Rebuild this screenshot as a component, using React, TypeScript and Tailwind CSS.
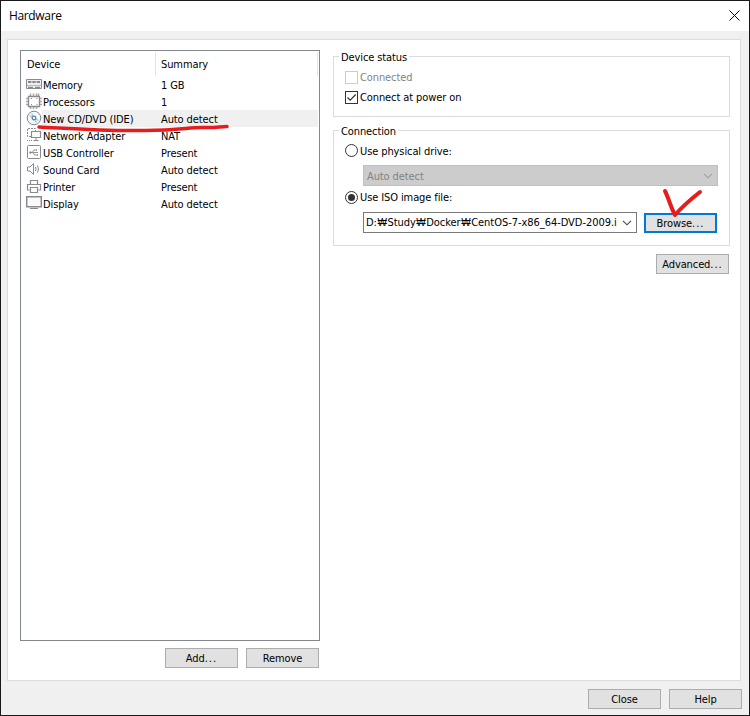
import type { ReactNode } from "react";

const devices = [
  { name: "Memory", summary: "1 GB", icon: "memory" },
  { name: "Processors", summary: "1", icon: "cpu" },
  { name: "New CD/DVD (IDE)", summary: "Auto detect", icon: "disc" },
  { name: "Network Adapter", summary: "NAT", icon: "network" },
  { name: "USB Controller", summary: "Present", icon: "usb" },
  { name: "Sound Card", summary: "Auto detect", icon: "sound" },
  { name: "Printer", summary: "Present", icon: "printer" },
  { name: "Display", summary: "Auto detect", icon: "display" },
];

function DeviceIcon({ type }: { type: string }) {
  return (
    <svg width="17" height="17" viewBox="0 0 17 17" fill="none" stroke="#8a8a8a" className="block shrink-0">
      {type === "memory" && (
        <>
          <path d="M.5 3.5h15v9H.5z" fill="#eee" />
          <path d="M2 6h12" strokeWidth="2" strokeDasharray="3.4 .9" />
          <path d="M1 9.5h14" stroke="#bbb" />
          <path d="M2 11.5h5M9 11.5h5" strokeWidth="1.6" />
        </>
      )}
      {type === "cpu" && (
        <>
          <path d="M4.5 .5v3M7.5 .5v3M10.5 .5v3M12.5 .5v3M4.5 13v3M7.5 13v3M10.5 13v3M0 5.5h3M0 8.5h3M0 11.5h3M13 5.5h3M13 8.5h3M13 11.5h3" strokeWidth="1.5" stroke="#aaa" />
          <path d="M2.5 3.5h11v10h-11z" fill="#fff" strokeWidth="1.3" />
          <path d="M5 5.5h1M10.500 5.5h1M5 11.5h1M10.5 11.5h1" />
        </>
      )}
      {type === "disc" && (
        <>
          <circle cx="8" cy="8" r="6.8" stroke="#7d858b" fill="#f5f9fb" />
          <path d="M3.5 5.5L6 7M5.5 3.5L7 6M9 10l1.5 2.5M10 9l2.5 1.5" stroke="#a5c3d3" strokeWidth="1.3" />
          <circle cx="8" cy="8" r="1.8" stroke="#5289a6" fill="#fff" strokeWidth="1.3" />
        </>
      )}
      {type === "network" && (
        <>
          <path d="M5 9.5H1.5v-8h8V4" strokeDasharray="2 1" />
          <path d="M5.5 4.5h9v6h-9z" fill="#fff" strokeWidth="1.2" />
          <path d="M10 11v2.5M7.5 13.5h5" />
          <path d="M1 13.5h6" strokeDasharray="1 1" />
        </>
      )}
      {type === "usb" && (
        <>
          <rect x="1.5" y="1.5" width="13" height="13" rx="1" />
          <path d="M4 8.5h8M6 8.5l2-2.5h2M7 8.5l1.5 2.5H11" strokeWidth=".9" />
          <circle cx="4.5" cy="8.5" r=".8" fill="#858585" />
          <path d="M10 6h1M11 11h1" strokeWidth="1.6" />
        </>
      )}
      {type === "sound" && (
        <>
          <path d="M1.5 6H4l3.5-3.5v11L4 10H1.500z" />
          <path d="M9.5 6q1 2 0 4M11.5 4.5q2 3.500 0 7" />
        </>
      )}
      {type === "printer" && (
        <>
          <path d="M4.5 6V2.5h7V6M3.5 12h-2V6.5h13V12h-2" strokeWidth="1.2" />
          <path d="M4.5 9.5h7v5h-7z" strokeWidth="1.2" />
        </>
      )}
      {type === "display" && (
        <>
          <path d="M.7 1.7h14.600v10H.7z" strokeWidth="1.5" fill="#fafafa" />
          <path d="M4 13.5h8" />
        </>
      )}
    </svg>
  );
}

function Button({ children, primary = false, dots = false, className = "" }: { children: ReactNode; primary?: boolean; dots?: boolean; className?: string }) {
  return (
    <button
      className={`flex h-5 w-[73px] items-center justify-center bg-[#e1e1e1] ${
        primary ? "border-2 border-[#0078d7]" : "border border-[#adadad]"
      } ${className}`}
    >
      {children}
      {dots && <span className="tracking-[1px]">...</span>}
    </button>
  );
}

function Chevron({ color }: { color: string }) {
  return (
    <svg width="10" height="6" viewBox="0 0 10 6" fill="none" stroke={color} className="shrink-0">
      <path d="M1 .8l4 4 4-4" strokeWidth="1.1" />
    </svg>
  );
}

function Radio({ checked = false }: { checked?: boolean }) {
  return (
    <span className="flex size-[13px] shrink-0 items-center justify-center rounded-full border border-[#333] bg-white">
      {checked && <span className="size-[7px] rounded-full bg-[#333]" />}
    </span>
  );
}

function Won() {
  return <span className="inline-block w-[10.5px] text-center font-['Liberation_Sans',sans-serif] text-[10px] tracking-normal">₩</span>;
}

export default function App() {
  return (
    <div className="relative flex h-[716px] w-[750px] flex-col border border-[#18171c] bg-[#f0f0f0] font-['DejaVu_Sans_Condensed','DejaVu_Sans',sans-serif] text-[11px] leading-[17px] tracking-[-0.1px] text-black [font-stretch:condensed]">
      <header className="flex h-[30px] shrink-0 items-center justify-between bg-white pr-[9px] pl-2">
        <h1 className="-mt-[2px] font-['Open_Sans',sans-serif] text-[12px] tracking-[-0.35px] [font-stretch:normal]">Hardware</h1>
        <svg width="11" height="11" viewBox="0 0 11 11" stroke="#000" fill="none" className="-mt-[2px]">
          <path d="M.5.5l10 10M10.5.5l-10 10" />
        </svg>
      </header>

      <main className="mx-[6px] mt-2 flex h-[642px] w-[734px] shrink-0 border border-[#dcdcdc] bg-white pt-[10px] pl-3">
        <section className="w-[300px] shrink-0">
          <div className="h-[591px] border border-[#828790] px-[1px] pt-[1px]">
            <div className="flex h-6 items-center">
              <div className="flex h-full w-[134px] items-center border-r border-[#e5e5e5] pl-[5px]">Device</div>
              <div className="flex h-full flex-1 items-center border-r border-[#e5e5e5] pl-[5px]">Summary</div>
            </div>
            {devices.map((device) => (
              <div key={device.name} className="flex h-[17px]">
                <div className="w-5 pl-1">
                  <DeviceIcon type={device.icon} />
                </div>
                <div className={`flex flex-1 pt-px whitespace-nowrap ${device.icon === "disc" ? "bg-[#f0f0f0]" : ""}`}>
                  <span className="w-[119px] pl-[1px]">{device.name}</span>
                  <span>{device.summary}</span>
                </div>
              </div>
            ))}
          </div>
          <div className="mt-[7px] flex justify-end gap-2 pr-px">
            <Button dots>Add</Button>
            <Button>Remove</Button>
          </div>
        </section>

        <section className="ml-[13px] w-[397px] shrink-0 pt-[6px]">
          <div className="h-[61px] border border-[#dcdcdc] pl-[11px]">
            <div className="-mt-[8px] -ml-[6px] w-fit bg-white px-[2px]">Device status</div>
            <label className="mt-px flex h-[20px] items-center gap-[2px] text-[#838383]">
              <span className="size-[13px] border border-[#ccc]" />
              Connected
            </label>
            <label className="flex h-[20px] items-center gap-[2px]">
              <span className="flex size-[13px] items-center justify-center border border-[#333]">
                <svg width="11" height="11" viewBox="0 0 11 11" fill="none" stroke="#333">
                  <path d="M1.5 5.5l2.7 2.7L9.7 2.5" strokeWidth="1.2" />
                </svg>
              </span>
              Connect at power on
            </label>
          </div>

          <div className="mt-[13px] h-[116px] border border-[#dcdcdc] pl-[11px]">
            <div className="-mt-[8px] -ml-[6px] w-fit bg-white px-[2px]">Connection</div>
            <label className="mt-px flex h-[19px] items-center gap-[2px]">
              <Radio />
              <span className="pt-[2px]">Use physical drive:</span>
            </label>
            <div className="mt-[5px] ml-[18px] flex h-[21px] w-[355px] items-center justify-between border border-[#bfbfbf] bg-[#ccc] pr-1 pl-[3px] text-[#838383]">
              <span className="pt-px">Auto detect</span>
              <Chevron color="#a0a0a0" />
            </div>
            <label className="mt-[2px] flex h-[18px] items-center gap-[2px]">
              <Radio checked />
              <span className="pt-px">Use ISO image file:</span>
            </label>
            <div className="mt-[6px] ml-[18px] flex items-start gap-[7px]">
              <div className="flex h-[21px] w-[274px] items-center justify-between border border-[#7a7a7a] bg-white pr-1 pl-[2px]">
                <span className="tracking-[-0.04px] whitespace-nowrap">
                  D:<Won />Study<Won />Docker<Won />CentOS-7-x86_64-DVD-2009.i
                </span>
                <Chevron color="#444" />
              </div>
              <Button primary dots className="mt-px">Browse</Button>
            </div>
          </div>
          <Button dots className="mt-2 mr-px ml-auto">Advanced</Button>
        </section>
      </main>

      <footer className="mt-2 flex justify-end gap-2 pr-[7px]">
        <Button>Close</Button>
        <Button>Help</Button>
      </footer>

      {/* hand-drawn marks on top of the dialog */}
      <svg className="pointer-events-none absolute -top-px -left-px" width="750" height="716" viewBox="0 0 750 716" fill="none" stroke="#e81c1c" strokeLinecap="round" strokeLinejoin="round">
        <path d="M39 127C62 128 100 131 140 130.5C178 131 189 127 204 127.5C216 128 220 126.5 227 126.5" strokeWidth="3.5" />
        <path d="M665 191C669 199 671 208 675 215C682 207 691 199 700 192" strokeWidth="4" />
      </svg>
    </div>
  );
}
